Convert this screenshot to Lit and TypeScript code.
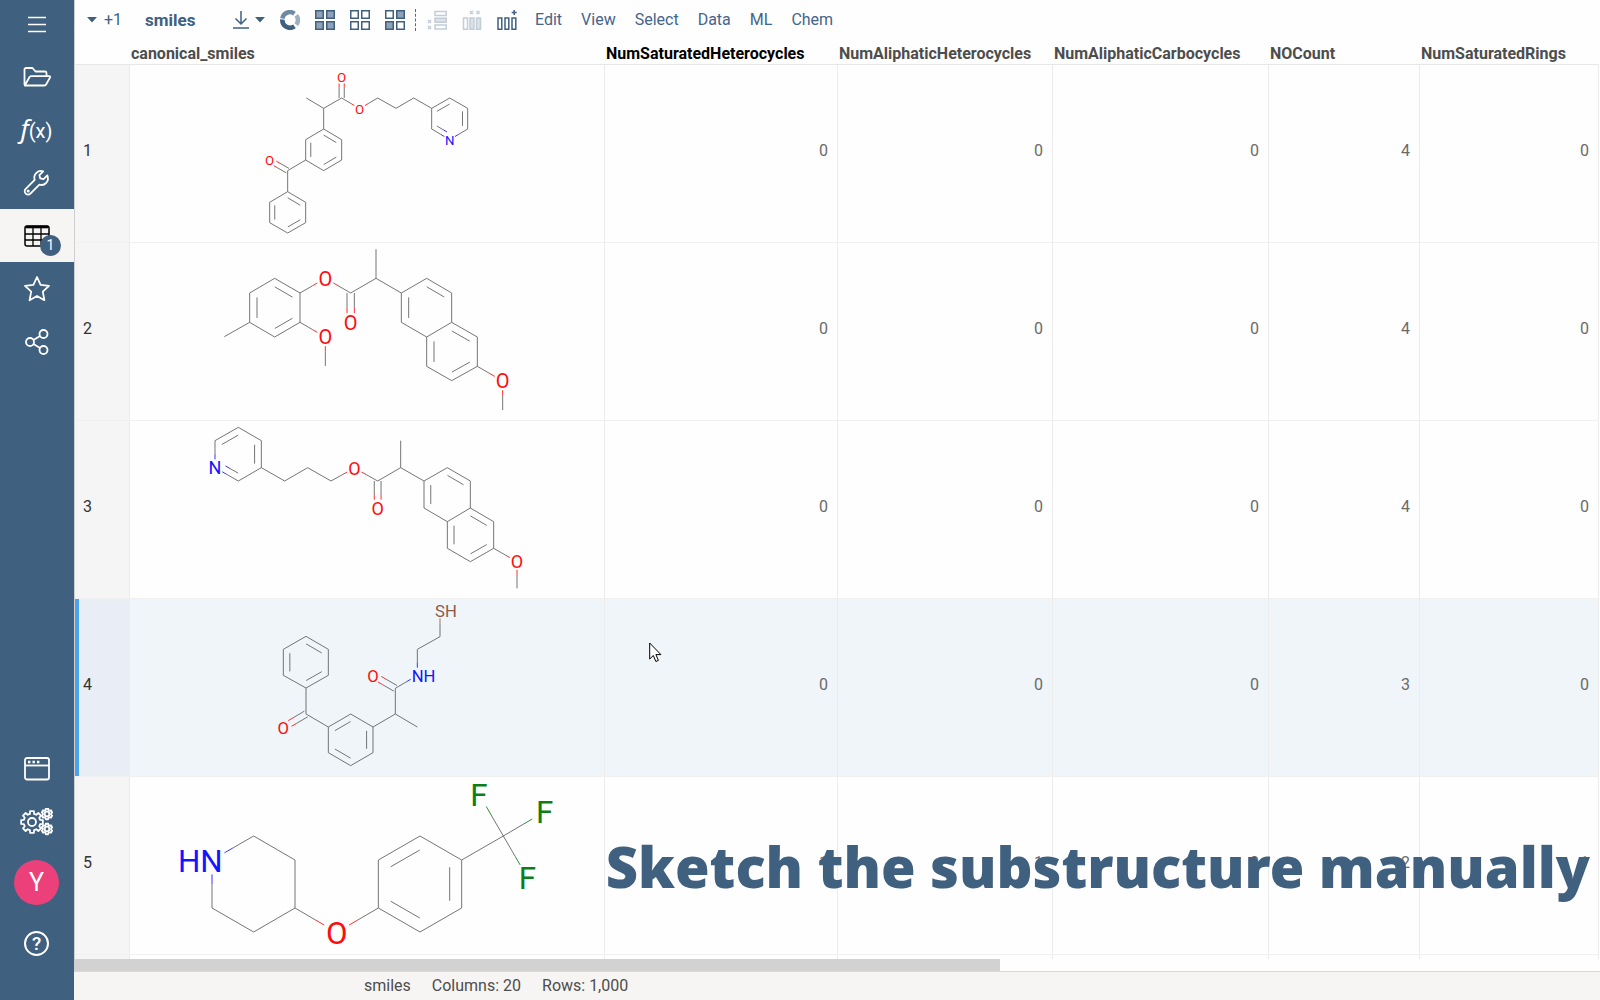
import { LitElement, html, svg, css, nothing } from "lit";
import { customElement, property } from "lit/decorators.js";
import { classMap } from "lit/directives/class-map.js";
import { styleMap } from "lit/directives/style-map.js";

/* ---------- Molecule data ---------- */

// x, y and, for anything but carbon, the label drawn at the atom.
type Atom = [number, number, string?];

interface Molecule {
  name: string;
  viewBox: string;
  labelSize: number;
  atoms: Atom[];
  single: [number, number][];
  double: [number, number][];
  rings: number[][];
}

const MOLECULES: Molecule[] = [
  {
    name: "3-(pyridin-3-yl)propyl ketoprofen ester",
    viewBox: "-270 15 1422 531",
    labelSize: 40,
    atoms: [
      [259, 114], [311, 145], [365, 114], [365, 52, "O"], [419, 146, "O"], [473, 114], [528, 145], [581, 114],
      [635, 145], [689, 114], [743, 145], [743, 207], [689, 239, "N"], [635, 207],
      [311, 207], [365, 239], [365, 300], [311, 332], [257, 300], [257, 239],
      [203, 332], [149, 301, "O"], [203, 395], [257, 427], [257, 488], [203, 519], [149, 488], [149, 427],
    ],
    single: [
      [0, 1], [1, 2], [2, 4], [4, 5], [5, 6], [6, 7], [7, 8], [9, 10], [11, 12], [13, 8], [1, 14],
      [15, 16], [17, 18], [19, 14], [18, 20], [20, 22], [23, 24], [25, 26], [27, 22],
    ],
    double: [[2, 3], [8, 9], [10, 11], [12, 13], [14, 15], [16, 17], [18, 19], [20, 21], [22, 23], [24, 25], [26, 27]],
    rings: [[8, 9, 10, 11, 12, 13], [14, 15, 16, 17, 18, 19], [22, 23, 24, 25, 26, 27]],
  },
  {
    name: "2-methoxy-4-methylphenyl naproxen ester",
    viewBox: "-210 9 1422 531",
    labelSize: 60,
    atoms: [
      [73, 290], [149, 247], [149, 159], [224, 115], [300, 159], [300, 247], [224, 291],
      [376, 115, "O"], [452, 159], [452, 247, "O"], [528, 115], [528, 28],
      [604, 159], [680, 115], [755, 159], [755, 247], [680, 291], [604, 247],
      [680, 379], [755, 422], [832, 379], [832, 291], [908, 423, "O"], [908, 510], [376, 291, "O"], [376, 378],
    ],
    single: [
      [0, 1], [2, 3], [4, 5], [6, 1], [4, 7], [7, 8], [8, 10], [10, 11], [10, 12], [12, 13], [14, 15],
      [15, 16], [16, 17], [18, 19], [20, 21], [20, 22], [22, 23], [5, 24], [24, 25],
    ],
    double: [[1, 2], [3, 4], [5, 6], [8, 9], [12, 17], [13, 14], [16, 18], [15, 21], [19, 20]],
    rings: [[1, 2, 3, 4, 5, 6], [12, 13, 14, 15, 16, 17], [15, 16, 18, 19, 20, 21]],
  },
  {
    name: "3-(pyridin-3-yl)propyl naproxen ester",
    viewBox: "-180 18 1422 531",
    labelSize: 54,
    atoms: [
      [75, 158, "N"], [75, 77], [145, 37], [214, 77], [214, 158], [145, 198], [284, 198], [353, 158], [423, 198],
      [493, 159, "O"], [563, 198], [563, 279, "O"], [632, 158], [632, 77],
      [702, 198], [772, 158], [841, 198], [841, 279], [772, 320], [702, 279],
      [772, 400], [841, 440], [911, 400], [911, 320], [981, 440, "O"], [981, 520],
    ],
    single: [
      [0, 1], [2, 3], [4, 5], [4, 6], [6, 7], [7, 8], [8, 9], [9, 10], [10, 12], [12, 13], [12, 14], [14, 15],
      [16, 17], [17, 18], [18, 19], [20, 21], [22, 23], [22, 24], [24, 25],
    ],
    double: [[1, 2], [3, 4], [5, 0], [10, 11], [14, 19], [15, 16], [18, 20], [17, 23], [21, 22]],
    rings: [[0, 1, 2, 3, 4, 5], [14, 15, 16, 17, 18, 19], [17, 18, 20, 21, 22, 23]],
  },
  {
    name: "ketoprofen N-(2-mercaptoethyl) amide",
    viewBox: "-360 12 1422 531",
    labelSize: 50,
    atoms: [
      [570, 47, "SH"], [570, 125], [502, 163], [502, 241, "NH"], [436, 280], [369, 241, "O"], [436, 357], [502, 396],
      [369, 396], [302, 357], [235, 396], [235, 473], [302, 512], [369, 473],
      [168, 357], [100, 397, "O"], [168, 279], [235, 241], [235, 163], [168, 124], [100, 163], [100, 241],
    ],
    single: [
      [0, 1], [1, 2], [2, 3], [3, 4], [4, 6], [6, 7], [6, 8], [8, 9], [10, 11], [12, 13], [10, 14], [14, 16],
      [17, 18], [19, 20], [21, 16],
    ],
    double: [[4, 5], [8, 13], [9, 10], [11, 12], [14, 15], [16, 17], [18, 19], [20, 21]],
    rings: [[8, 9, 10, 11, 12, 13], [16, 17, 18, 19, 20, 21]],
  },
  {
    name: "4-[4-(trifluoromethyl)phenoxy]piperidine",
    viewBox: "-90 21 1422 531",
    labelSize: 94,
    atoms: [
      [156, 270, "HN"], [281, 198], [405, 270], [405, 414], [281, 486], [156, 414], [530, 487, "O"],
      [655, 414], [655, 270], [780, 198], [905, 270], [905, 414], [780, 486],
      [1030, 198], [957, 72, "F"], [1154, 125, "F"], [1102, 322, "F"],
    ],
    single: [
      [0, 1], [1, 2], [2, 3], [3, 4], [4, 5], [5, 0], [3, 6], [6, 7], [7, 8], [9, 10], [11, 12], [10, 13],
      [13, 14], [13, 15], [13, 16],
    ],
    double: [[8, 9], [10, 11], [12, 7]],
    rings: [[7, 8, 9, 10, 11, 12]],
  },
];

const CARBON = "#5f5f5f";
const ELEMENT_COLORS: Record<string, string> = { O: "#ff0d0d", N: "#1414ff", S: "#8f5a4a", F: "#0b7f17" };
const elementOf = (label: string) => label.replace("H", "");

@customElement("molecule-view")
export class MoleculeView extends LitElement {
  @property({ attribute: false }) molecule!: Molecule;

  static styles = css`
    :host { display: block; }
    svg { display: block; width: 100%; height: 100%; overflow: visible; }
    .bond { stroke-width: 2.6; fill: none; }
    .label { font-family: Roboto, "Liberation Sans", sans-serif; }
  `;

  private color(i: number) {
    const label = this.molecule.atoms[i][2];
    return label ? ELEMENT_COLORS[elementOf(label)] : CARBON;
  }

  // A bond line shifted sideways by (ox, oy), cut short at labelled atoms
  // and coloured half by half after the atoms it joins.
  private line(a: number, b: number, ox = 0, oy = 0, inset = 0) {
    const { atoms, labelSize } = this.molecule;
    const [ax, ay, la] = atoms[a];
    const [bx, by, lb] = atoms[b];
    const len = Math.hypot(bx - ax, by - ay);
    const gap = (labelSize * 0.46) / len;
    const t0 = Math.max(la ? gap : 0, inset);
    const t1 = 1 - Math.max(lb ? gap : 0, inset);
    const at = (t: number) => [ax + (bx - ax) * t + ox, ay + (by - ay) * t + oy];
    const seg = (s: number, e: number, color: string) => {
      const [x1, y1] = at(s);
      const [x2, y2] = at(e);
      return svg`<line class="bond" x1=${x1} y1=${y1} x2=${x2} y2=${y2} stroke=${color}></line>`;
    };
    return this.color(a) === this.color(b)
      ? seg(t0, t1, CARBON)
      : [seg(t0, 0.5, this.color(a)), seg(0.5, t1, this.color(b))];
  }

  private doubleBond(a: number, b: number) {
    const { atoms, rings } = this.molecule;
    const [ax, ay] = atoms[a];
    const [bx, by] = atoms[b];
    const nx = -(by - ay);
    const ny = bx - ax;
    const ring = rings.find((r) => r.includes(a) && r.includes(b));
    if (!ring) {
      return [this.line(a, b, nx * 0.125, ny * 0.125), this.line(a, b, -nx * 0.125, -ny * 0.125)];
    }
    const cx = ring.reduce((s, i) => s + atoms[i][0], 0) / ring.length;
    const cy = ring.reduce((s, i) => s + atoms[i][1], 0) / ring.length;
    const side = nx * (cx - ax) + ny * (cy - ay) > 0 ? 0.25 : -0.25;
    return [this.line(a, b), this.line(a, b, nx * side, ny * side, 0.15)];
  }

  private label([x, y, text]: Atom) {
    if (!text) return nothing;
    const size = this.molecule.labelSize;
    const anchor = text.length === 1 ? "middle" : text.startsWith("H") ? "end" : "start";
    const half = (text.startsWith("S") ? 0.3 : 0.34) * size;
    const tx = anchor === "middle" ? x : anchor === "end" ? x + half : x - half;
    return svg`<text class="label" x=${tx} y=${y + size * 0.37} font-size=${size}
      text-anchor=${anchor} fill=${ELEMENT_COLORS[elementOf(text)]}>${text}</text>`;
  }

  render() {
    const m = this.molecule;
    return html`<svg viewBox=${m.viewBox} role="img" aria-label=${m.name}>
      ${m.single.map(([a, b]) => this.line(a, b))}
      ${m.double.map(([a, b]) => this.doubleBond(a, b))}
      ${m.atoms.map((a) => this.label(a))}
    </svg>`;
  }
}

/* ---------- Side bar ---------- */

const stroke = (body: unknown, w = 28, h = 28) =>
  html`<svg class="icon" width=${w} height=${h} viewBox="0 0 ${w} ${h}" aria-hidden="true">${body}</svg>`;

const gear = (cx: number, cy: number, r: number, teeth: number, depth: number) => {
  const pts: string[] = [];
  for (let i = 0; i < teeth; i++) {
    const step = (Math.PI * 2) / teeth;
    const c = i * step - Math.PI / 2;
    for (const [da, rr] of [[-0.32, r - depth], [-0.22, r], [0.22, r], [0.32, r - depth]]) {
      const a = c + da * step;
      pts.push(`${(cx + Math.cos(a) * rr).toFixed(2)},${(cy + Math.sin(a) * rr).toFixed(2)}`);
    }
  }
  return svg`<polygon points=${pts.join(" ")}></polygon>`;
};

const SIDE_ICONS = {
  menu: stroke(svg`<path d="M5 6.500h18M5 13.500h18M5 20.500h18" stroke-width="1.5"></path>`),
  folder: stroke(svg`<path d="M1.5 22V6.5a1.5 1.5 0 0 1 1.5-1.5h6.500l3 3.500h9.500a1.500 1.500 0 0 1 1.500 1.500v3.200M1.800 22.500l4.600-8.300a2 2 0 0 1 1.700-1h18.300a.8.8 0 0 1 .7 1.200l-4 7.100a2 2 0 0 1-1.700 1z" transform="translate(1 0)"></path>`, 30, 28),
  wrench: stroke(svg`<path d="M24.300 6.400l-3.800 3.800-3.300-.8-.8-3.300 3.800-3.800c-2.400-.7-5.200-.1-7 1.800-1.800 1.900-2.300 4.500-1.500 6.800L2.700 19.900a3.300 3.300 0 0 0 0 4.700 3.300 3.300 0 0 0 4.700 0l9-9c2.300.8 4.900.2 6.700-1.600 1.900-2 2.300-5 1.200-7.600z"></path><circle cx="5.200" cy="22" r=".6"></circle>`),
  table: stroke(svg`<rect x="2" y="4" width="24" height="20" rx="2" stroke-width="1.5"></rect><path d="M3 5h22" stroke-width="2.600"></path><path d="M2 12h24M2 18h24M10 6v18M18 6v18" stroke-width="1.300"></path>`),
  star: stroke(svg`<path d="M14 2l3.600 7.900 8.400 1-6.200 5.800 1.600 8.500L14 21l-7.400 4.200 1.600-8.500L2 10.900l8.400-1z"></path>`),
  share: stroke(svg`<circle cx="20.500" cy="6" r="4"></circle><circle cx="7" cy="14" r="4"></circle><circle cx="20.500" cy="22" r="4"></circle><path d="M10.500 12l6.500-4M10.500 16l6.500 4"></path>`),
  window: stroke(svg`<rect x="2" y="3" width="24" height="21.500" rx="2"></rect><path d="M2 10.500h24"></path><path d="M5 7h2.400M9.500 7h2.400M14 7h2.400" stroke-width="2.400" stroke-linecap="butt"></path>`),
  gears: stroke(svg`${gear(12, 14, 11, 8, 2.6)}<circle cx="12" cy="14" r="4"></circle>${gear(27, 6, 5.400, 6, 1.200)}<circle cx="27" cy="6" r="2.300"></circle>${gear(27, 21, 5.400, 6, 1.200)}<circle cx="27" cy="21" r="2.300"></circle>`, 34, 28),
};

@customElement("side-bar")
export class SideBar extends LitElement {
  static styles = css`
    :host {
      display: flex; flex-direction: column; flex: none; width: 74px;
      background: #40607f; color: #fff; padding-bottom: 30px; box-sizing: border-box;
    }
    button {
      display: flex; align-items: center; justify-content: center; position: relative;
      width: 100%; height: 53px; padding: 0 1px 0 0; border: 0; background: none; color: inherit; font: inherit; cursor: pointer;
    }
    .top { height: 50px; }
    .active { background: #f7f5f4; color: #000; }
    .spacer { flex: 1; }
    .icon { display: block; fill: none; stroke: currentColor; stroke-width: 1.8; stroke-linejoin: round; }
    .fx { display: flex; align-items: baseline; font: 20px/26px Roboto, sans-serif; }
    .fx-f { font: italic 26px/26px "Noto Sans", sans-serif; }
    .badge {
      position: absolute; left: 40px; top: 26px; width: 21px; height: 21px; border-radius: 50%;
      background: #40607f; color: #fff; font: 14px/20px Roboto, sans-serif; text-align: center;
    }
    .account { height: 69px; }
    .avatar {
      width: 45px; height: 45px; border-radius: 50%; background: #ec407a;
      font: 25px/46px Roboto, sans-serif; text-align: center;
    }
    .help {
      width: 21px; height: 21px; border: 2px solid #fff; border-radius: 50%;
      font: 500 19px/21px Roboto, sans-serif; text-align: center;
    }
  `;

  render() {
    return html`
      <button class="top" aria-label="Menu">${SIDE_ICONS.menu}</button>
      <button aria-label="Open file">${SIDE_ICONS.folder}</button>
      <button aria-label="Functions"><span class="fx"><span class="fx-f">f</span>(x)</span></button>
      <button aria-label="Tools">${SIDE_ICONS.wrench}</button>
      <button class="active" aria-label="Tables">${SIDE_ICONS.table}<span class="badge">1</span></button>
      <button aria-label="Favorites">${SIDE_ICONS.star}</button>
      <button aria-label="Share">${SIDE_ICONS.share}</button>
      <div class="spacer"></div>
      <button aria-label="Windows">${SIDE_ICONS.window}</button>
      <button aria-label="Settings">${SIDE_ICONS.gears}</button>
      <button class="account" aria-label="Account"><span class="avatar">Y</span></button>
      <button aria-label="Help"><span class="help">?</span></button>
    `;
  }
}

/* ---------- Tool bar ---------- */

const square = (x: number, y: number, on: boolean) =>
  svg`<rect x=${x + 0.75} y=${y + 0.75} width="7.500" height="7.500" fill=${on ? "#8ea3b9" : "#fff"} stroke="#40607f" stroke-width="1.500"></rect>`;

const squares = (on: boolean[]) => html`<svg width="20" height="20" viewBox="0 0 20 20" aria-hidden="true">
  ${on.map((v, i) => square((i % 2) * 11, Math.floor(i / 2) * 11, v))}
</svg>`;

const caret = html`<svg width="10" height="6" viewBox="0 0 10 6" aria-hidden="true"><path d="M0 0h10L5 5.500z" fill="#40607f"></path></svg>`;

@customElement("tool-bar")
export class ToolBar extends LitElement {
  static styles = css`
    :host {
      display: flex; align-items: center; height: 39px; padding-left: 12px;
      font: 16px/20px Roboto, sans-serif; color: #40607f;
    }
    svg { display: block; }
    button { display: flex; align-items: center; padding: 0; border: 0; background: none; font: inherit; color: inherit; cursor: pointer; }
    .views { gap: 7px; width: 58px; }
    .title { width: 88px; font-size: 17px; font-weight: 700; }
    .download { gap: 6px; width: 47px; }
    .tools { display: flex; align-items: center; gap: 15px; }
    .selection { display: flex; align-items: center; gap: 15px; margin: 0 18px 0 10px; padding-left: 11px; border-left: 1px dashed #666; height: 22px; }
    .faded { opacity: 0.3; }
    nav { display: flex; gap: 19px; color: #45658a; }
  `;

  render() {
    return html`
      <button class="views" aria-label="Views">${caret}<span>+1</span></button>
      <span class="title">smiles</span>
      <button class="download" aria-label="Download">
        <svg width="16" height="18" viewBox="0 0 16 18" aria-hidden="true">
          <path d="M8 0v13M2.500 7.500L8 13l5.500-5.500M0 17h16" fill="none" stroke="#40607f" stroke-width="1.500"></path>
        </svg>
        ${caret}
      </button>
      <div class="tools">
        <button aria-label="Refresh">
          <svg width="20" height="20" viewBox="0 0 20 20" aria-hidden="true" fill="none" stroke-width="4.500">
            <path d="M2.300 8.500A7.800 7.800 0 0 1 14.500 3.600" stroke="#7089a3"></path>
            <path d="M2.300 9.500A7.800 7.800 0 0 0 14.500 16.400" stroke="#40607f"></path>
            <path d="M16.300 5.400A7.800 7.800 0 0 1 16.300 14.600" stroke="#9db0c2"></path>
          </svg>
        </button>
        <button aria-label="Select all">${squares([true, true, true, true])}</button>
        <button aria-label="Select none">${squares([false, false, false, false])}</button>
        <button aria-label="Invert selection">${squares([false, true, true, false])}</button>
      </div>
      <div class="selection">
        <button class="faded" aria-label="Remove rows" disabled>
          <svg width="20" height="20" viewBox="0 0 20 20" aria-hidden="true" fill="none" stroke="#40607f" stroke-width="1.500">
            <path d="M8 1.500h11.200v4H8zM8 15h11.200v4H8z"></path><path d="M8 8.300h11.200v4H8z" fill="#8ea3b9"></path>
            <path d="M1 10l3 3M4 10l-3 3M1 16l3 3M4 16l-3 3"></path>
          </svg>
        </button>
        <button class="faded" aria-label="Remove columns" disabled>
          <svg width="20" height="20" viewBox="0 0 20 20" aria-hidden="true" fill="none" stroke="#40607f" stroke-width="1.500">
            <path d="M1.500 8h4v11.200h-4z"></path><path d="M8 8h4v11.200H8zM14.500 8h4v11.200h-4z" fill="#8ea3b9"></path>
            <path d="M8 1l3 3M11 1L8 4M14.500 1l3 3M17.500 1l-3 3"></path>
          </svg>
        </button>
        <button aria-label="Add column">
          <svg width="20" height="20" viewBox="0 0 20 20" aria-hidden="true" fill="none" stroke="#40607f" stroke-width="1.500">
            <path d="M1 8h3.800v11.200H1zM8 8h3.800v11.200H8zM15 8h3.800v11.200H15zM17.200 0v5M14.700 2.500h5"></path>
          </svg>
        </button>
      </div>
      <nav>
        ${["Edit", "View", "Select", "Data", "ML", "Chem"].map((m) => html`<button>${m}</button>`)}
      </nav>
    `;
  }
}

/* ---------- Grid ---------- */

const COLUMNS = [
  { name: "canonical_smiles", width: 475 },
  { name: "NumSaturatedHeterocycles", width: 233 },
  { name: "NumAliphaticHeterocycles", width: 215 },
  { name: "NumAliphaticCarbocycles", width: 216 },
  { name: "NOCount", width: 151 },
  { name: "NumSaturatedRings", width: 179 },
];

const VALUES = [
  [0, 0, 0, 4, 0],
  [0, 0, 0, 4, 0],
  [0, 0, 0, 4, 0],
  [0, 0, 0, 3, 0],
  [1, 1, 0, 2, 1],
];

@customElement("data-grid")
export class DataGrid extends LitElement {
  @property({ type: Number }) currentRow = 4;
  @property() currentColumn = "NumSaturatedHeterocycles";

  static styles = css`
    :host { display: block; overflow: hidden; font: 16px/20px Roboto, sans-serif; }
    table { table-layout: fixed; width: 0; border-collapse: separate; border-spacing: 0; }
    th, td { box-sizing: border-box; padding: 0; font-weight: 400; }
    .number-col { width: 55px; }
    thead th {
      height: 26px; padding: 5px 0 0 1px; border-bottom: 1px solid #e8e8e8; vertical-align: bottom;
      text-align: left; font-weight: 700; color: #4d4d4d; white-space: nowrap;
    }
    thead .current { color: #000; }
    tbody th, td { height: 178px; border-right: 1px solid #ececec; border-bottom: 1px solid #f0f0f0; }
    tbody th { padding: 0 0 5px 8px; background: #f5f5f5; color: #333; text-align: left; }
    td { color: #6a6a6a; }
    .value { padding: 0 9px 5px 0; text-align: right; }
    .structure { height: 177px; }
    .selected td { background: #f0f5fa; }
    .selected th { background: #e9eef6; box-shadow: inset 4px 0 #4ba3ee; }
  `;

  render() {
    return html`
      <table>
        <colgroup>
          <col class="number-col" />
          ${COLUMNS.map((c) => html`<col style=${styleMap({ width: `${c.width}px` })} />`)}
        </colgroup>
        <thead>
          <tr>
            <th></th>
            ${COLUMNS.map(
              (c) => html`<th scope="col" class=${classMap({ current: c.name === this.currentColumn })}>${c.name}</th>`
            )}
          </tr>
        </thead>
        <tbody>
          ${VALUES.map(
            (row, i) => html`<tr class=${classMap({ selected: i + 1 === this.currentRow })}>
              <th scope="row">${i + 1}</th>
              <td><molecule-view class="structure" .molecule=${MOLECULES[i]}></molecule-view></td>
              ${row.map((v) => html`<td class="value">${v}</td>`)}
            </tr>`
          )}
          <tr aria-hidden="true"><th></th>${COLUMNS.map(() => html`<td></td>`)}</tr>
        </tbody>
      </table>
    `;
  }
}

/* ---------- Page ---------- */

@customElement("app-root")
export class AppRoot extends LitElement {
  static styles = css`
    :host { display: flex; position: relative; height: 100vh; overflow: hidden; background: #fefefe; }
    main { display: flex; flex-direction: column; flex: 1; min-width: 0; }
    .workspace { display: flex; flex-direction: column; flex: 1; min-height: 0; border-left: 1px solid #d0d0d0; }
    data-grid { flex: 1; min-height: 0; }
    .scroll { height: 12px; border-bottom: 1px solid #d6dbda; }
    .thumb { height: 12px; background: #d2d2d2; }
    footer {
      display: flex; gap: 21px; height: 28px; padding-left: 290px; background: #f7f5f3;
      font: 16px/28px Roboto, sans-serif; color: #4d4d4d;
    }
    .caption {
      position: absolute; right: 10px; bottom: 94px; margin: 0; white-space: nowrap; color: #40607f;
      font: 900 56px/80px "Noto Sans", "Open Sans", sans-serif;
    }
    .pointer { position: absolute; left: 649px; top: 642px; }
  `;

  render() {
    return html`
      <side-bar></side-bar>
      <main>
        <div class="workspace">
          <tool-bar></tool-bar>
          <data-grid></data-grid>
          <div class="scroll"><div class="thumb" style=${styleMap({ width: `${(925 / 1525) * 100}%` })}></div></div>
        </div>
        <footer><span>smiles</span><span>Columns: 20</span><span>Rows: 1,000</span></footer>
      </main>
      <p class="caption">Sketch the substructure manually</p>
      <svg class="pointer" width="13" height="21" viewBox="0 0 13 21" aria-hidden="true">
        <path d="M.7 1v16l3.600-3.500 2.600 6 2.500-1.100-2.500-5.800h5z" fill="#fff" stroke="#000" stroke-width="1"></path>
      </svg>
    `;
  }
}
